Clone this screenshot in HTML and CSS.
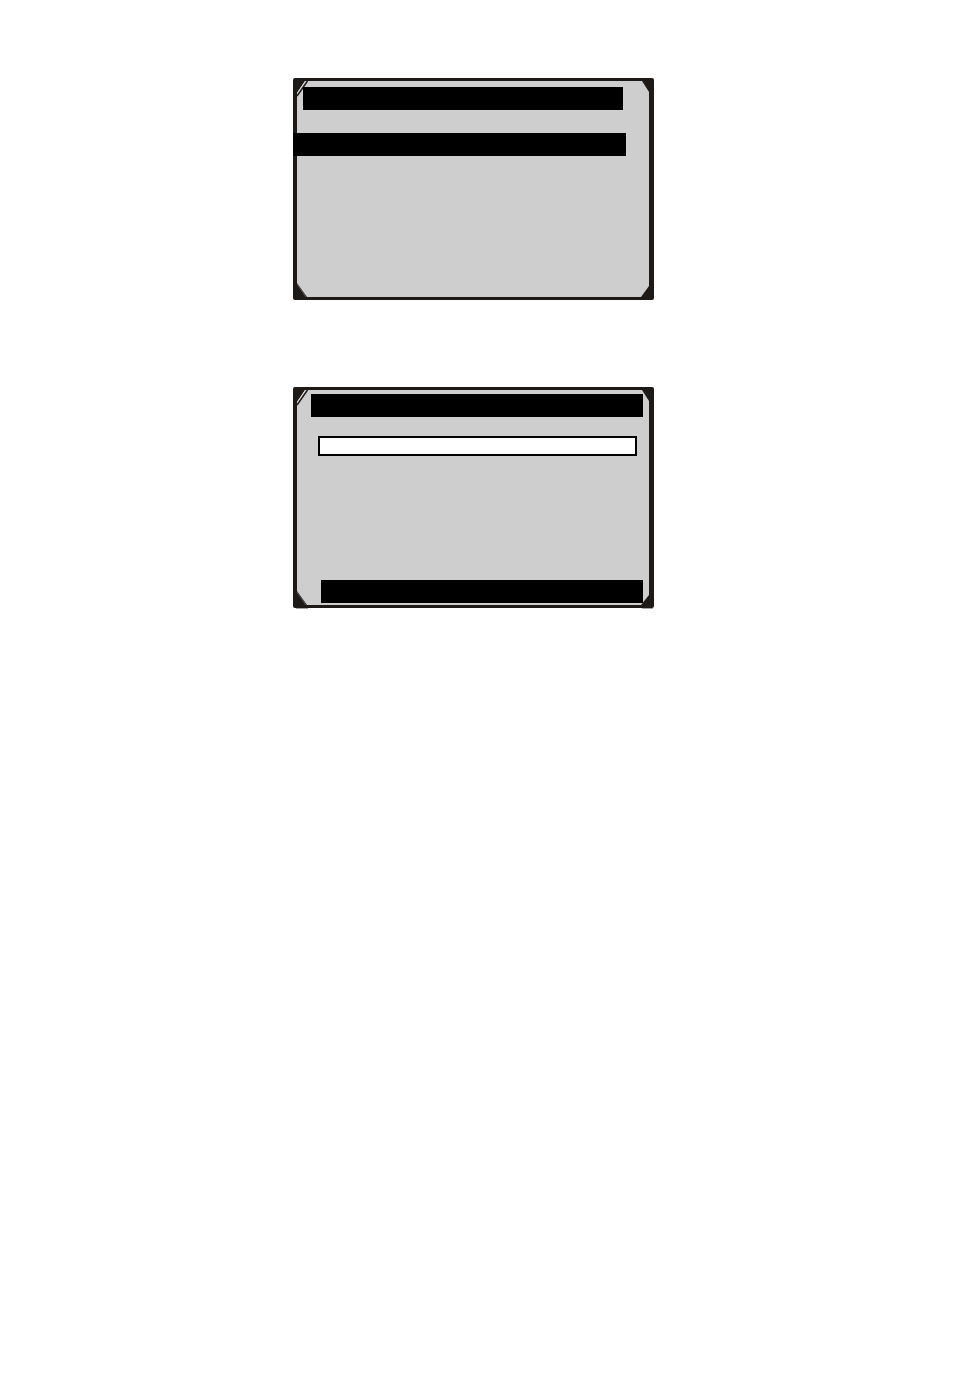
FILE: index.html
```
<!DOCTYPE html>
<html lang="en">
<head>
  <meta charset="UTF-8">
  <meta name="viewport" content="width=device-width, initial-scale=1.0">
  <title>Display screens</title>
  <link rel="stylesheet" href="styles.css">
</head>
<body>
  <main class="screens">
    <section class="screen">
      <svg class="corner top-left" width="12" height="16" viewBox="0 0 12 16"><path class="fill" d="M0 0H8L0 12Z"/><path class="shine" d="M8.5 0L0 12.5"/><path class="line" d="M10.5 0L0 15"/></svg>
      <svg class="corner top-right" width="8" height="12" viewBox="0 0 8 12"><path class="fill" d="M1 0H8V11Z"/></svg>
      <svg class="corner bottom-left" width="10" height="14" viewBox="0 0 10 14"><path class="fill" d="M0 0L10 14H0Z"/><path class="edge" d="M0 1L9 14"/></svg>
      <svg class="corner bottom-right" width="8" height="12" viewBox="0 0 8 12"><path class="fill" d="M8 1V12H0Z"/></svg>
      <div class="bar title"></div>
      <div class="bar selected"></div>
    </section>

    <section class="screen form">
      <svg class="corner top-left" width="12" height="16" viewBox="0 0 12 16"><path class="fill" d="M0 0H8L0 12Z"/><path class="shine" d="M8.5 0L0 12.5"/><path class="line" d="M10.5 0L0 15"/></svg>
      <svg class="corner top-right" width="8" height="12" viewBox="0 0 8 12"><path class="fill" d="M1 0H8V11Z"/></svg>
      <svg class="corner bottom-left" width="13" height="18" viewBox="0 0 13 18"><path class="fill" d="M0 0H1L11 14H0Z"/><path class="edge" d="M1 1L10 14"/><path class="shadow" d="M0 17H12V18H0Z"/></svg>
      <svg class="corner bottom-right" width="12" height="14" viewBox="0 0 12 14"><path class="fill" d="M8 0V10H0Z"/><path class="shadow" d="M1 13H12V14H1Z"/></svg>
      <div class="bar title"></div>
      <input class="field" type="text" aria-label="Value">
      <div class="bar footer"></div>
    </section>
  </main>
</body>
</html>
```
FILE: styles.css
```
body {
  margin: 0;
  background-color: #fff;
  font-family: "Liberation Sans", Arial, sans-serif;
}
.screens {
  display: flex;
  flex-direction: column;
  align-items: center;
  gap: 87px;
  padding: 78px 7px 78px 0;
}
.screen {
  position: relative;
  display: flex;
  flex-direction: column;
  box-sizing: border-box;
  width: 100%;
  max-width: 361px;
  min-height: 222px;
  padding-top: 6px;
  border: 3px solid #1e1a18;
  border-left-width: 4px;
  border-right-width: 5px;
  border-radius: 2px;
  background-color: #cecece;
}
.bar {
  position: relative;
  height: 23px;
  background-color: #000;
}
.title {
  margin: 0 26px 0 6px;
}
/* the highlighted row runs over the left frame */
.selected {
  margin: 23px 23px 0 -4px;
}
.form {
  min-height: 221px;
  padding: 4px 0 2px;
}
.form .title {
  margin: 0 6px 0 14px;
}
.field {
  box-sizing: border-box;
  height: 20px;
  margin: 19px 12px 0 21px;
  padding: 0 4px;
  border: 2px solid #000;
  border-radius: 0;
  background-color: #fff;
  font: inherit;
  font-size: 12px;
}
.footer {
  margin: auto 6px 0 24px;
}

/* frame corners */
.corner {
  position: absolute;
}
.top-left {
  top: 0;
  left: 0;
}
.top-right {
  top: 0;
  right: 0;
}
.bottom-left {
  bottom: 0;
  left: 0;
}
.bottom-right {
  right: 0;
  bottom: 0;
}
.form .bottom-left {
  bottom: -4px;
  left: -1px;
}
.form .bottom-right {
  right: -4px;
  bottom: -4px;
}
.fill {
  fill: #1e1a18;
}
.line {
  fill: none;
  stroke: #1e1a18;
  stroke-width: 1.5;
}
.shine {
  fill: none;
  stroke: #dedede;
  stroke-width: 1;
}
.edge {
  fill: none;
  stroke: #77706c;
  stroke-width: 0.7;
}
.shadow {
  fill: #aaa5a3;
}
```
